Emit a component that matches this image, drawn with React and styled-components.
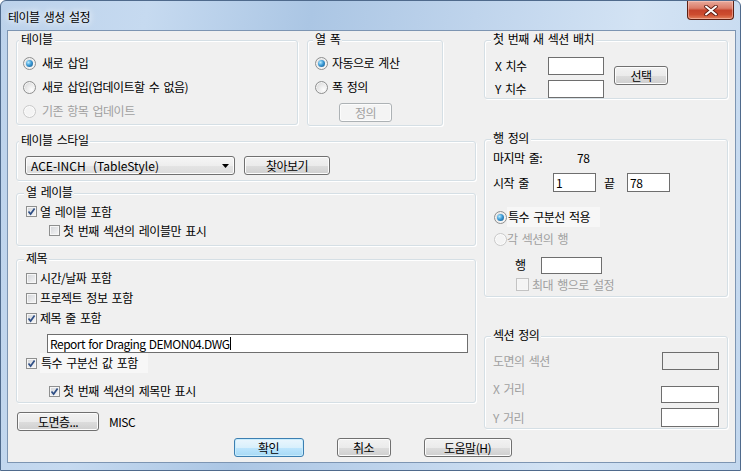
import React from 'react'
import styled, { createGlobalStyle } from 'styled-components'

const GlobalStyle = createGlobalStyle`
  html, body {
    margin: 0;
    padding: 0;
    background: #ffffff;
  }
  body {
    font-family: "Noto Sans CJK KR", "Noto Sans", sans-serif;
    font-size: 12px;
    line-height: 14px;
    letter-spacing: -0.5px;
    word-spacing: 2px;
    color: #000;
  }
  * {
    box-sizing: border-box;
  }
`

const Window = styled.div`
  width: 741px;
  height: 471px;
  display: flex;
  flex-direction: column;
  padding: 0 4px 7px 6px;
  border: 1px solid #4f6a8c;
  border-radius: 6px 6px 0 0;
  background: linear-gradient(100deg, #bcd2eb 0%, #c6daf0 18%, #abc6e4 38%, #bfd4ec 58%, #d3e3f4 78%, #c2d7ee 100%);
`

const TitleBar = styled.div`
  height: 29px;
  display: flex;
  align-items: flex-start;
  justify-content: space-between;
`

const Title = styled.span`
  margin: 9px 0 0 1px;
  font-size: 12px;
  text-shadow: 0 0 6px #fff, 0 0 10px rgba(255, 255, 255, 0.9);
`

const CloseButton = styled.div`
  width: 47px;
  height: 19px;
  margin-right: 2px;
  border: 1px solid #5c2013;
  border-top: none;
  border-radius: 0 0 4px 4px;
  display: flex;
  align-items: center;
  justify-content: center;
  background: linear-gradient(#e8aa9c 0%, #dc7c68 40%, #c5432b 52%, #cd4c2f 75%, #e2805c 100%);
  box-shadow: inset 0 0 0 1px rgba(255, 210, 200, 0.5);
`

const Client = styled.div`
  flex: 1;
  border: 1px solid #7d95b2;
  background: #f0f0f0;
  display: flex;
  flex-direction: column;
  padding: 9px 6px 0 8px;
`

const Columns = styled.div`
  display: flex;
  gap: 8px;
`

const Column = styled.div`
  width: ${p => p.$w}px;
  display: flex;
  flex-direction: column;
`

const TopRow = styled.div`
  display: flex;
  gap: 9px;
  align-items: flex-start;
`

const Group = styled.div`
  position: relative;
  width: ${p => (p.$w ? `${p.$w}px` : 'auto')};
  height: ${p => p.$h}px;
  margin-top: ${p => p.$mt || 0}px;
  border: 1px solid #d5dfe5;
  border-radius: 3px;
  box-shadow: inset 1px 1px 0 #fff, 1px 1px 0 #fff;
  padding: ${p => p.$pad};
  display: flex;
  flex-direction: column;
  align-items: flex-start;
`

const Legend = styled.span`
  position: absolute;
  top: -9px;
  left: ${p => p.$x}px;
  padding: 0 2px;
  background: #f0f0f0;
  line-height: 14px;
  color: ${p => (p.$disabled ? '#a0a0a0' : '#000')};
`

const Row = styled.div`
  display: flex;
  align-items: center;
  height: ${p => p.$h || 20}px;
  margin-top: ${p => p.$mt || 0}px;
  margin-left: ${p => p.$ml || 0}px;
  color: ${p => (p.$disabled ? '#a0a0a0' : '#000')};
  white-space: pre;
`

const SpreadRow = styled(Row)`
  align-self: stretch;
  justify-content: space-between;
`

const Circle = styled.span`
  position: relative;
  flex: none;
  width: 13px;
  height: 13px;
  margin-right: ${p => p.$gap ?? 6}px;
  border-radius: 50%;
  border: 1px solid ${p => (p.$disabled ? '#c9c9c9' : '#8e8f8f')};
  background: ${p => (p.$disabled
    ? '#f4f4f4'
    : 'radial-gradient(circle at 70% 70%, #fdfdfd 0%, #e6e6e6 55%, #cdcdcd 100%)')};
  box-shadow: inset 0 0 0 1px ${p => (p.$disabled ? '#fbfbfb' : '#f4f4f4')};

  &::after {
    content: '';
    display: ${p => (p.$on ? 'block' : 'none')};
    position: absolute;
    left: 2px;
    top: 2px;
    width: 7px;
    height: 7px;
    border-radius: 50%;
    background: radial-gradient(circle at 35% 35%, #b8ecff 0%, #3c9ad6 45%, #12507f 100%);
  }
`

const Box = styled.span`
  flex: none;
  width: ${p => p.$size || 11}px;
  height: ${p => p.$size || 11}px;
  margin-right: 3px;
  border: 1px solid ${p => (p.$disabled ? '#c3c3c3' : '#8e8f8f')};
  background: ${p => (p.$disabled ? '#f4f4f4' : 'linear-gradient(135deg, #d2d4d8 0%, #f7f7f7 100%)')};
  box-shadow: inset 0 0 0 1px #f6f6f6;
  display: flex;
  align-items: center;
  justify-content: center;
`

const Text = styled.span`
  display: flex;
  align-items: center;
  height: 100%;
  padding: ${p => (p.$hl ? '0 10px 0 1px' : '0')};
  background: ${p => (p.$hl ? '#f7f7f7' : 'transparent')};
`

const Label = styled.span`
  flex: none;
  width: ${p => (p.$w ? `${p.$w}px` : 'auto')};
  margin-left: ${p => p.$ml || 0}px;
  align-self: ${p => (p.$top ? 'flex-start' : 'auto')};
  margin-top: ${p => p.$mt || 0}px;
  color: ${p => (p.$disabled ? '#a0a0a0' : '#000')};
`

const Field = styled.div`
  flex: none;
  width: ${p => p.$w}px;
  height: ${p => p.$h || 18}px;
  margin-top: ${p => p.$mt || 0}px;
  margin-left: ${p => p.$ml || 0}px;
  border: 1px solid #6e6e6e;
  background: ${p => (p.$disabled ? 'transparent' : '#fff')};
  padding: 0 2px;
  display: flex;
  align-items: center;
  white-space: pre;
  word-spacing: 1px;
`

const Caret = styled.span`
  width: 1px;
  height: 13px;
  background: #000;
`

const Button = styled.div`
  flex: none;
  width: ${p => p.$w}px;
  height: 19px;
  margin-top: ${p => p.$mt || 0}px;
  margin-left: ${p => p.$ml || 0}px;
  border: 1px solid ${p => (p.$primary ? '#3c7fb1' : p.$disabled ? '#adb2b5' : '#707070')};
  border-radius: 3px;
  display: flex;
  align-items: center;
  justify-content: center;
  color: ${p => (p.$disabled ? '#a0a0a0' : '#000')};
  background: ${p => (p.$primary
    ? 'linear-gradient(#eaf6fd 0%, #d9f0fc 50%, #bee6fd 51%, #a7d9f5 100%)'
    : p.$disabled
      ? '#f4f4f4'
      : 'linear-gradient(#f2f2f2 0%, #ebebeb 50%, #dddddd 51%, #cfcfcf 100%)')};
  box-shadow: inset 0 0 0 1px ${p => (p.$primary ? '#c8ecfd' : '#fcfcfc')};
`

const Combo = styled.div`
  width: 210px;
  height: 19px;
  border: 1px solid #707070;
  border-radius: 3px;
  padding: 0 5px 0 5px;
  display: flex;
  align-items: center;
  justify-content: space-between;
  white-space: pre;
  letter-spacing: 0;
  word-spacing: 1px;
  background: linear-gradient(#f6f6f6 0%, #eeeeee 50%, #e4e4e4 51%, #dcdcdc 100%);
  box-shadow: inset 0 0 0 1px #fcfcfc;
`

const FormRow = styled.div`
  display: flex;
  align-items: flex-start;
`

const FieldStack = styled.div`
  display: flex;
  flex-direction: column;
  gap: 5px;
`

const BottomRow = styled.div`
  display: flex;
  align-items: center;
  margin-top: ${p => p.$mt || 0}px;
  margin-left: ${p => p.$ml || 0}px;
`

const ButtonRow = styled.div`
  display: flex;
  justify-content: center;
  gap: 33px;
  margin-top: 7px;
`

function Radio({ on, disabled, gap, hl, h, mt, ml, children }) {
  return (
    <Row $h={h || 24} $mt={mt} $ml={ml} $disabled={disabled}>
      <Circle $on={on} $disabled={disabled} $gap={gap} />
      <Text $hl={hl}>{children}</Text>
    </Row>
  )
}

function Check({ on, disabled, size, hl, h, mt, ml, children }) {
  return (
    <Row $h={h || 20} $mt={mt} $ml={ml} $disabled={disabled}>
      <Box $disabled={disabled} $size={size}>
        {on && (
          <svg width="9" height="9" viewBox="0 0 9 9">
            <path d="M1.5 4.5 L3.6 7 L7.6 1.5" fill="none" stroke="#2f4f86" strokeWidth="1.7" />
          </svg>
        )}
      </Box>
      <Text $hl={hl}>{children}</Text>
    </Row>
  )
}

export default function App() {
  return (
    <>
      <GlobalStyle />
      <Window>
        <TitleBar>
          <Title>테이블 생성 설정</Title>
          <CloseButton>
            <svg width="14" height="11" viewBox="0 0 14 11">
              <path d="M2 1.5 L12 9.5 M12 1.5 L2 9.5" stroke="#5a1a10" strokeWidth="3.6" strokeLinecap="round" />
              <path d="M2 1.5 L12 9.5 M12 1.5 L2 9.5" stroke="#ffffff" strokeWidth="2" strokeLinecap="round" />
            </svg>
          </CloseButton>
        </TitleBar>

        <Client>
          <Columns>
            <Column $w={460}>
              <TopRow>
                <Group $w={282} $h={85} $pad="10px 0 0 6px">
                  <Legend $x={2}>테이블</Legend>
                  <Radio on>새로 삽입</Radio>
                  <Radio>새로 삽입(업데이트할 수 없음)</Radio>
                  <Radio disabled>기존 항목 업데이트</Radio>
                </Group>
                <Group $w={136} $h={86} $pad="10px 0 0 7px">
                  <Legend $x={5}>열 폭</Legend>
                  <Radio on gap={4}>자동으로 계산</Radio>
                  <Radio gap={4}>폭 정의</Radio>
                  <Button $w={53} $mt={4} $ml={24} $disabled>정의</Button>
                </Group>
              </TopRow>

              <Group $h={40} $mt={15} $pad="14px 0 0 8px">
                <Legend $x={2}>테이블 스타일</Legend>
                <Row $h={19}>
                  <Combo>
                    <span>ACE-INCH  (TableStyle)</span>
                    <svg width="7" height="4" viewBox="0 0 7 4">
                      <polygon points="0,0 7,0 3.5,4" fill="#000" />
                    </svg>
                  </Combo>
                  <Button $w={86} $ml={9}>찾아보기</Button>
                </Row>
              </Group>

              <Group $h={53} $mt={12} $pad="8px 0 0 9px">
                <Legend $x={7}>열 레이블</Legend>
                <Check on h={19}>열 레이블 포함</Check>
                <Check h={19} ml={23}>첫 번째 섹션의 레이블만 표시</Check>
              </Group>

              <Group $h={144} $mt={13} $pad="8px 0 0 9px">
                <Legend $x={7}>제목</Legend>
                <Check>시간/날짜 포함</Check>
                <Check>프로젝트 정보 포함</Check>
                <Check on>제목 줄 포함</Check>
                <Field $w={421} $h={19} $mt={6} $ml={21}>
                  Report for Draging DEMON04.DWG<Caret />
                </Field>
                <Check on hl>특수 구분선 값 포함</Check>
                <Check on mt={8} ml={23}>첫 번째 섹션의 제목만 표시</Check>
              </Group>

              <BottomRow $mt={9} $ml={1}>
                <Button $w={82}>도면층...</Button>
                <Label $ml={10}>MISC</Label>
              </BottomRow>
            </Column>

            <Column $w={244}>
              <Group $h={59} $pad="16px 0 0 10px">
                <Legend $x={6}>첫 번째 새 섹션 배치</Legend>
                <FormRow>
                  <FieldStack>
                    <Row $h={18}>
                      <Label $w={53}>X 치수</Label>
                      <Field $w={56} />
                    </Row>
                    <Row $h={18}>
                      <Label $w={53}>Y 치수</Label>
                      <Field $w={56} />
                    </Row>
                  </FieldStack>
                  <Button $w={54} $ml={10} $mt={9}>선택</Button>
                </FormRow>
              </Group>

              <Group $h={158} $mt={40} $pad="9px 0 0 8px">
                <Legend $x={6}>행 정의</Legend>
                <Row $h={18}>
                  <Label $w={84}>마지막 줄:</Label>
                  <Label>78</Label>
                </Row>
                <Row $h={19} $mt={6}>
                  <Label $w={60}>시작 줄</Label>
                  <Field $w={43} $h={19}>1</Field>
                  <Label $w={23} $ml={8}>끝</Label>
                  <Field $w={43} $h={19}>78</Field>
                </Row>
                <Radio on hl gap={0} h={20} mt={15} ml={1}>특수 구분선 적용</Radio>
                <Radio disabled gap={0} h={20} mt={2} ml={1}>각 섹션의 행</Radio>
                <Row $h={18} $mt={7} $ml={22}>
                  <Label $w={26}>행</Label>
                  <Field $w={61} $h={17} />
                </Row>
                <Check disabled size={13} h={17} mt={2} ml={23}>최대 행으로 설정</Check>
              </Group>

              <Group $h={93} $mt={39} $pad="15px 8px 0 8px">
                <Legend $x={6}>섹션 정의</Legend>
                <SpreadRow $h={18}>
                  <Label $disabled>도면의 섹션</Label>
                  <Field $w={57} $disabled />
                </SpreadRow>
                <SpreadRow $h={17} $mt={16}>
                  <Label $disabled $top $mt={-4}>X 거리</Label>
                  <Field $w={58} $h={17} />
                </SpreadRow>
                <SpreadRow $h={19} $mt={5}>
                  <Label $disabled>Y 거리</Label>
                  <Field $w={58} $h={19} />
                </SpreadRow>
              </Group>
            </Column>
          </Columns>

          <ButtonRow>
            <Button $w={70} $primary>확인</Button>
            <Button $w={54}>취소</Button>
            <Button $w={88}>도움말(H)</Button>
          </ButtonRow>
        </Client>
      </Window>
    </>
  )
}
